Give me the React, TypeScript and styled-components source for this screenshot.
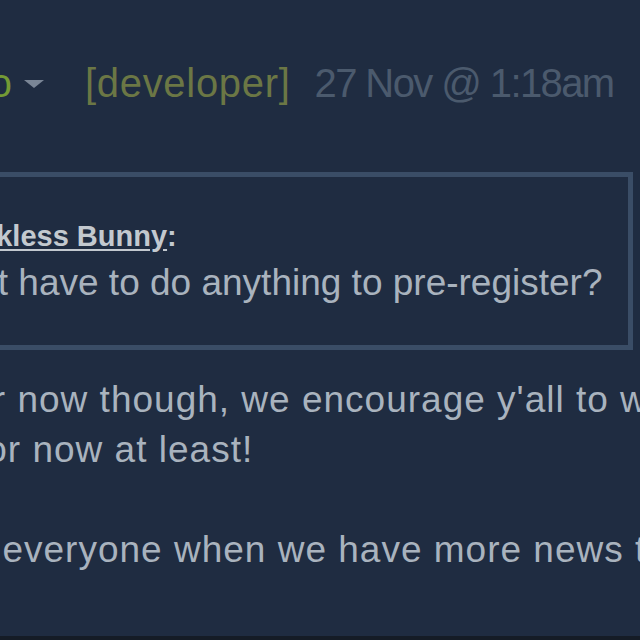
import { createGlobalStyle, styled } from "styled-components"

const GlobalStyle = createGlobalStyle`
  html, body {
    margin: 0;
    padding: 0;
    background: #1f2c41;
  }
`

const Page = styled.div`
  width: 640px;
  height: 640px;
  box-sizing: border-box;
  overflow: hidden;
  background: #1f2c41;
  border-bottom: 4px solid #151c26;
  padding-top: 59px;
  font-family: "Liberation Sans", Arial, sans-serif;
  display: flex;
  flex-direction: column;
`

const Header = styled.div<{ $shift: number }>`
  display: flex;
  align-items: center;
  white-space: nowrap;
  height: 48px;
  line-height: 48px;
  font-size: 40px;
  margin-left: ${(p) => p.$shift}px;
`

const AuthorName = styled.span`
  color: #739a35;
`

const Dropdown = styled.span`
  width: 0;
  height: 0;
  margin-left: 12px;
  margin-top: 2px;
  border-left: 10px solid transparent;
  border-right: 10px solid transparent;
  border-top: 8px solid #7a8696;
`

const DevTag = styled.span`
  color: #6b7745;
  margin-left: 41px;
  letter-spacing: 0.7px;
`

const PostDate = styled.span`
  color: #4b5a6d;
  margin-left: 24px;
  letter-spacing: -1.6px;
`

const Quote = styled.div`
  margin-top: 65px;
  margin-left: -20px;
  margin-right: 7px;
  border: 5px solid #3a4d66;
  padding: 40px 0 35px 20px;
  overflow: hidden;
`

const Line = styled.div<{ $shift: number; $size: number; $height: number; $color: string; $spacing?: number }>`
  white-space: nowrap;
  margin-left: ${(p) => p.$shift}px;
  font-size: ${(p) => p.$size}px;
  line-height: ${(p) => p.$height}px;
  height: ${(p) => p.$height}px;
  color: ${(p) => p.$color};
  letter-spacing: ${(p) => p.$spacing ?? 0}px;
`

const QuoteHead = styled(Line)`
  font-weight: 700;
`

const QuotedUser = styled.span`
  text-decoration: underline;
  text-underline-offset: 3px;
`

const Body = styled.div`
  margin-top: 25px;
`

const bodyColor = "#a9b3be"

export default function App() {
  return (
    <>
      <GlobalStyle />
      <Page>
        <Header $shift={-37}>
          <AuthorName>Bo</AuthorName>
          <Dropdown />
          <DevTag>[developer]</DevTag>
          <PostDate>27 Nov @ 1:18am</PostDate>
        </Header>
        <Quote>
          <QuoteHead $shift={-62} $size={29} $height={39} $color="#c3c9cf">
            <QuotedUser>Reckless Bunny</QuotedUser>:
          </QuoteHead>
          <Line $shift={-76} $size={37} $height={54} $color={bodyColor}>
            don't have to do anything to pre-register?
          </Line>
        </Quote>
        <Body>
          <Line $shift={-40} $size={37} $height={50} $color={bodyColor} $spacing={1}>
            for now though, we encourage y'all to wishlist the game
          </Line>
          <Line $shift={-25} $size={37} $height={50} $color={bodyColor} $spacing={1}>
            for now at least!
          </Line>
          <Line $shift={0} $size={37} $height={50} $color={bodyColor} />
          <Line $shift={-128} $size={37} $height={50} $color={bodyColor} $spacing={1}>
            update everyone when we have more news to share
          </Line>
        </Body>
      </Page>
    </>
  )
}
